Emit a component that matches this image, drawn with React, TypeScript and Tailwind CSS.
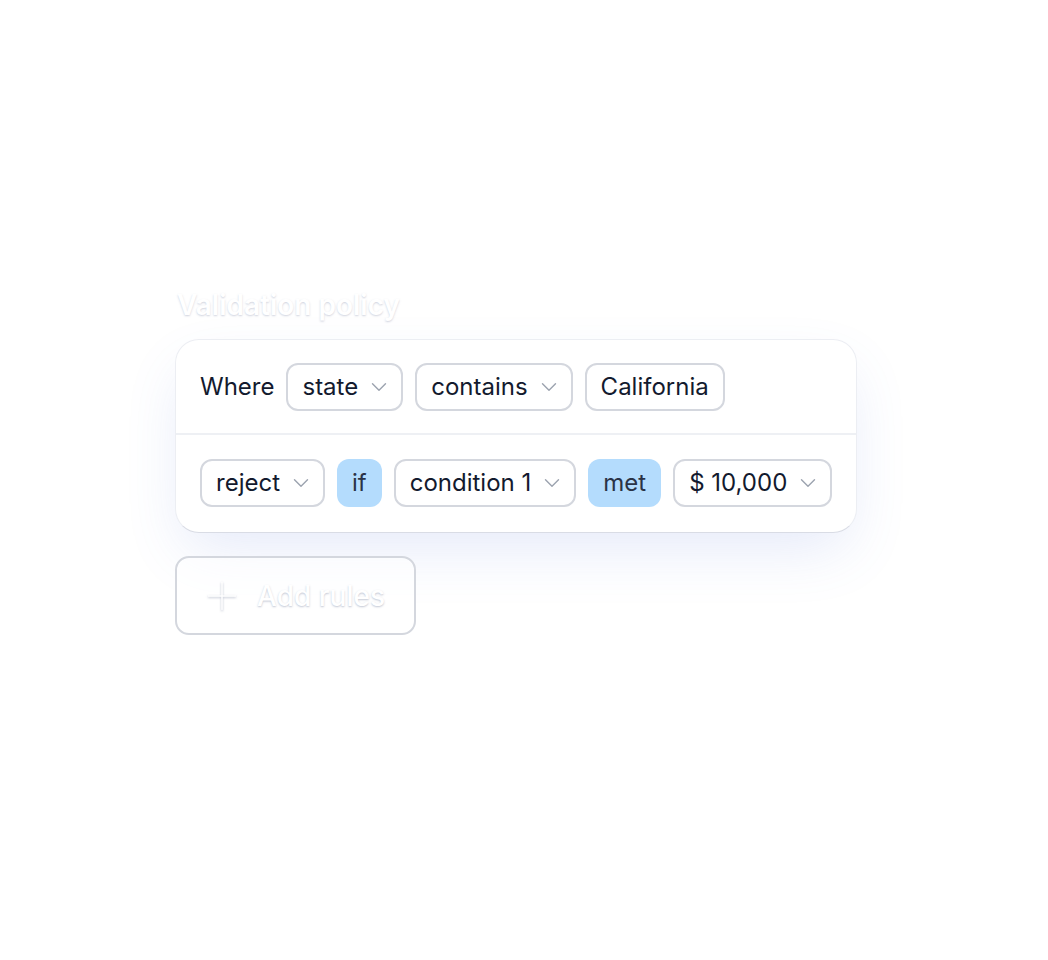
import { ChevronDown, Plus } from "lucide-react";

const font = { fontFamily: "Inter, 'Noto Sans', sans-serif" };

function Select({ label }: { label: string }) {
  return (
    <div className="flex h-12 shrink-0 items-center gap-2 whitespace-nowrap rounded-xl border-2 border-[#d4d7de] bg-white pl-[14px] pr-[9px] text-[24px] text-[#131a2e]">
      <span>{label}</span>
      <ChevronDown size={26} strokeWidth={1.3} className="text-[#9ca3af]" />
    </div>
  );
}

function Value({ label }: { label: string }) {
  return (
    <div className="flex h-12 shrink-0 items-center whitespace-nowrap rounded-xl border-2 border-[#d4d7de] bg-white px-[14px] text-[24px] text-[#131a2e]">
      {label}
    </div>
  );
}

function Keyword({ label }: { label: string }) {
  return (
    <div className="flex h-12 shrink-0 items-center whitespace-nowrap rounded-xl bg-[#b4dcfd] px-[15px] text-[24px] text-[#2a3346]">
      {label}
    </div>
  );
}

export default function App() {
  return (
    <div className="min-h-[960px] w-full bg-white" style={font}>
      <div className="pl-[175px] pt-[287px]">
        <h2 className="pl-[2px] text-[28px] font-semibold leading-[36px] text-white [text-shadow:0_1px_2px_rgba(120,130,160,0.35)]">
          Validation policy
        </h2>
        <div className="mt-[16px] w-fit rounded-[24px] border border-[#eceef3] border-b-[#d9dce5] bg-white shadow-[0_24px_60px_-10px_rgba(90,120,220,0.16)]">
          <div className="flex items-center gap-3 border-b-2 border-[#eef0f4] px-6 pb-[22px] pt-[23px]">
            <span className="text-[24px] text-[#131a2e]">Where</span>
            <Select label="state" />
            <Select label="contains" />
            <Value label="California" />
          </div>
          <div className="flex items-center gap-3 px-6 pb-[25px] pt-[24px]">
            <Select label="reject" />
            <Keyword label="if" />
            <Select label="condition 1" />
            <Keyword label="met" />
            <Select label="$ 10,000" />
          </div>
        </div>
        <button
          type="button"
          className="mt-[23px] flex h-[79px] w-[241px] items-center gap-[12px] rounded-[14px] border-2 border-[#d4d7de] bg-white/60 pl-[22px] text-[28px] font-medium text-white [text-shadow:0_1px_2px_rgba(120,130,160,0.45)]"
        >
          <Plus size={46} strokeWidth={0.8} className="text-white [filter:drop-shadow(0_1px_1px_rgba(120,130,160,0.5))]" />
          Add rules
        </button>
      </div>
    </div>
  );
}
